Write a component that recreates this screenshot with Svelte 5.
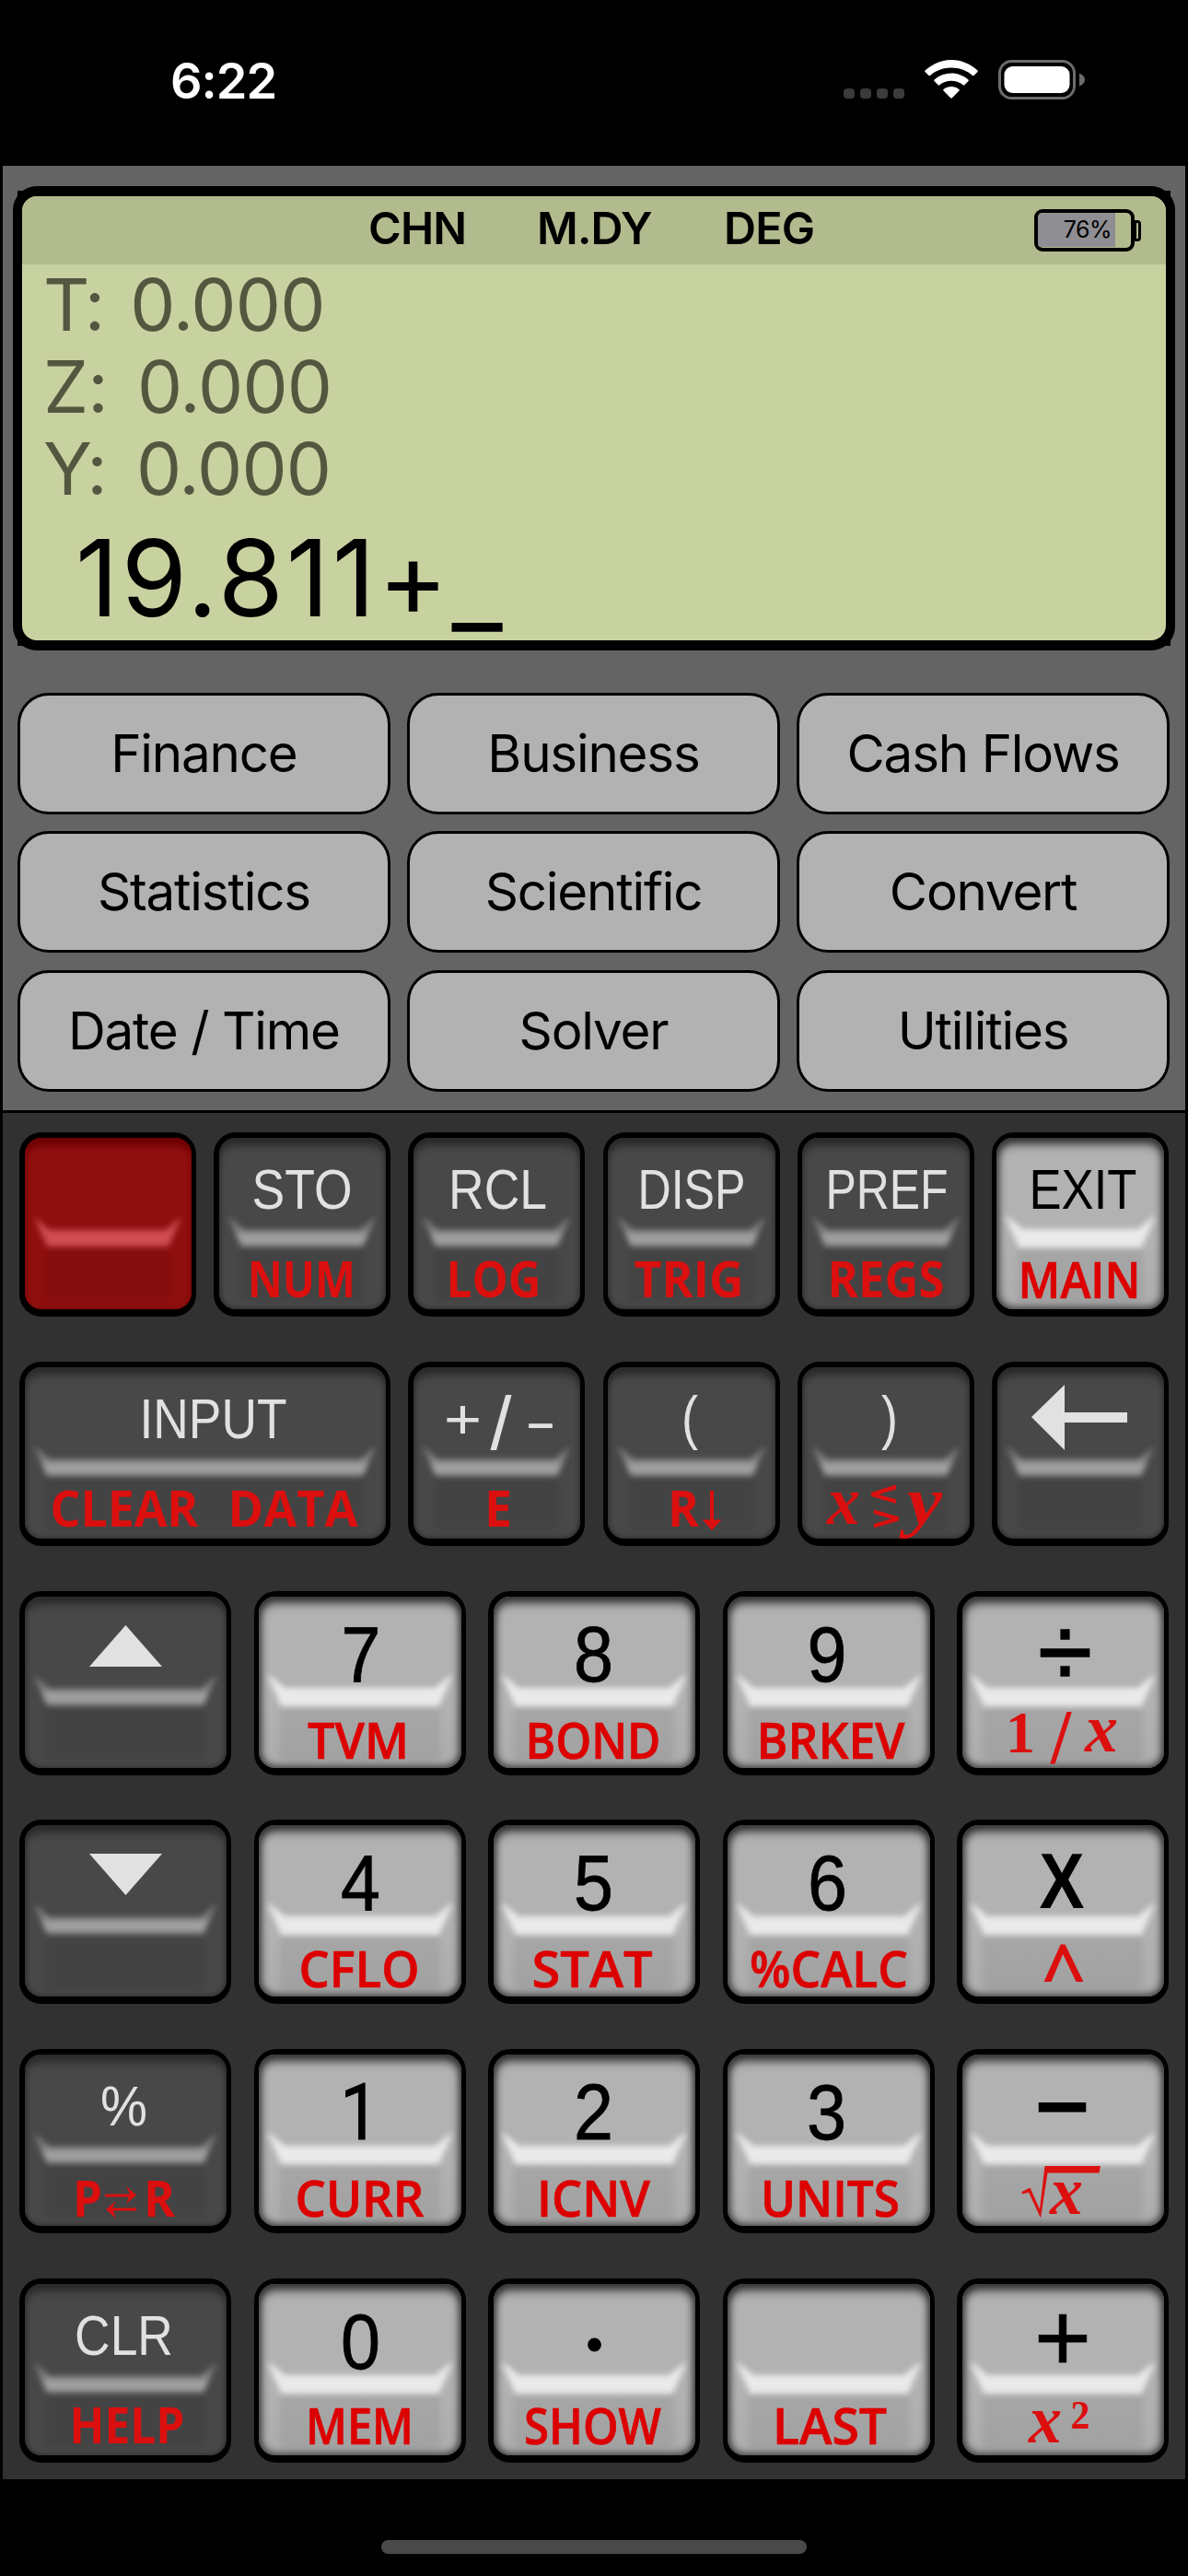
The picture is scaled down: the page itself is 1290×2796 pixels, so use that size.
<script lang="ts">
  type Label = {
    t: string;
    x: number;
    y: number;
    w: number;
    s: number;
    c: string;
  };

  type Key = {
    tone: "dark" | "light" | "red";
    width: number;
    labels: Label[];
    icons?: string[];
  };

  const menu = [
    "Finance", "Business", "Cash Flows",
    "Statistics", "Scientific", "Convert",
    "Date / Time", "Solver", "Utilities",
  ];

  const stack = [
    { name: "T:", value: "0.000" },
    { name: "Z:", value: "0.000" },
    { name: "Y:", value: "0.000" },
  ];

  // label helpers, x is the centre of the label inside its key
  const cap = (t: string, x: number, w: number, y = 82.5, s = 62): Label => ({ t, x, y, w, s, c: "cap" });
  const num = (t: string, x: number, c = "num"): Label => ({ t, x, y: 98, w: 43, s: 86, c });
  const alt = (t: string, x: number, w: number, y = 179): Label => ({ t, x, y, w, s: 54, c: "alt" });
  const math = (t: string, x: number, w: number, y: number, s = 74, c = "math"): Label => ({ t, x, y, w, s, c });

  const dark = (width: number, labels: Label[], icons: string[] = []): Key => ({ tone: "dark", width, labels, icons });
  const light = (width: number, labels: Label[], icons: string[] = []): Key => ({ tone: "light", width, labels, icons });

  const rows: Key[][] = [
    [
      { tone: "red", width: 192, labels: [] },
      dark(192, [cap("STO", 96, 109), alt("NUM", 95.5, 117)]),
      dark(192, [cap("RCL", 97.5, 107), alt("LOG", 93, 103)]),
      dark(192, [cap("DISP", 96, 117), alt("TRIG", 93, 119)]),
      dark(192, [cap("PREF", 97, 133), alt("REGS", 96, 127)]),
      light(192, [cap("EXIT", 99, 117), alt("MAIN", 95, 133, 180)]),
    ],
    [
      dark(403, [cap("INPUT", 210.5, 160), alt("CLEAR", 114, 161), alt("DATA", 297, 141)]),
      dark(192, [cap("+", 59.5, 41), cap("/", 101, 23, 95, 81), cap("-", 144, 35, 86), alt("E", 98, 30)]),
      dark(192, [cap("(", 94, 18, 82.5, 65), alt("R", 87, 34)], ["down"]),
      dark(192, [cap(")", 100, 18, 82.5, 65), math("x", 50, 36, 176), math("y", 138, 38, 176)], ["compare"]),
      dark(192, [], ["back"]),
    ],
    [
      dark(230, [], ["triUp"]),
      light(230, [num("7", 116), alt("TVM", 113, 110, 182)]),
      light(230, [num("8", 114.5), alt("BOND", 114, 147, 182)]),
      light(230, [num("9", 113), alt("BRKEV", 117, 161, 182)]),
      light(230, [{ t: "÷", x: 117.5, y: 104, w: 59, s: 112, c: "op thin" }, math("1", 69, 32, 175, 64, "math roman"), math("/", 113, 22, 187, 84, "math roman"), math("x", 157, 36, 174)]),
    ],
    [
      dark(230, [], ["triDown"]),
      light(230, [num("4", 115.5), alt("CFLO", 114, 131, 182)]),
      light(230, [num("5", 114.5), alt("STAT", 113, 131, 182)]),
      light(230, [num("6", 113.5), alt("%CALC", 115, 172, 182)]),
      light(230, [{ t: "X", x: 114, y: 96, w: 49, s: 86, c: "op" }, { t: "^", x: 116, y: 199, w: 48, s: 88, c: "caret" }]),
    ],
    [
      dark(230, [cap("%", 113.5, 51), alt("P", 74, 32, 182), alt("R", 152, 34, 182)], ["swap"]),
      light(230, [num("1", 114.5, "num one"), alt("CURR", 114.5, 140, 182)]),
      light(230, [num("2", 114.5), alt("ICNV", 114.5, 123, 182)]),
      light(230, [num("3", 112.5), alt("UNITS", 116.5, 151, 182)]),
      light(230, [{ t: "−", x: 114.5, y: 95, w: 60, s: 96, c: "op" }, math("x", 119, 36, 179)], ["root"]),
    ],
    [
      dark(230, [cap("CLR", 113.5, 107), alt("HELP", 117, 125, 178.5)]),
      light(230, [num("0", 115.5), alt("MEM", 114.5, 117, 179.5)]),
      light(230, [{ t: "•", x: 115.5, y: 89, w: 18, s: 52, c: "num" }, alt("SHOW", 113.5, 149, 179.5)]),
      light(230, [alt("LAST", 116, 124, 179.5)]),
      light(230, [{ t: "+", x: 115, y: 100, w: 62, s: 106, c: "num" }, math("x", 96, 36, 178), math("2", 134, 21, 163, 45, "math roman")]),
    ],
  ];

  const icons: Record<string, string> = {
    back: "M43 60 79 25V55H147V66H79V96Z",
    triUp: "M115.500 37 155 82H76Z",
    triDown: "M76 37H155L115.500 82Z",
    down: "M116 140H120V171.500H128.500L118 183 107.500 171.500H116Z",
    compare: "M107 133.500V138.500L88 144 107 149.500V154L80 146V142ZM83 160.500 110 168.500V172.500L83 180.500V176L102 170.500 83 165Z",
    swap: "M93 157.500H120L116 149 127 158.500 116 168 119 160.500H93ZM127 172.500H101L105 165 94 174 105 184 102 175.500H127Z",
    root: "M70.500 155 79.500 150.500 90 174 95.500 127H156L154.500 134.500H98.500L91 183.500 78 155.500 71 157.500Z",
  };

  // bright crease across the middle of a key, turned up at both ends
  function ridge(w: number) {
    return `M16 92 30 124H${w - 30}L${w - 16} 92 ${w - 33} 106H33Z`;
  }
</script>

<svg class="defs" width="0" height="0">
  <defs>
    <linearGradient id="crease-dark" gradientUnits="userSpaceOnUse" x1="0" y1="92" x2="0" y2="125">
      <stop offset="0" stop-color="#8a8a8a" />
      <stop offset="0.35" stop-color="#7a7a7a" />
      <stop offset="0.7" stop-color="#a6a6a6" />
      <stop offset="1" stop-color="#8c8c8c" />
    </linearGradient>
  </defs>
</svg>

<div class="phone">
  <header class="status">
    <span class="time">6:22</span>
    <div class="signals">
      <svg width="68" height="12" viewBox="0 0 68 12" fill="#3b3b3b">
        <rect width="12" height="11" rx="4" />
        <rect x="18" width="12" height="11" rx="4" />
        <rect x="36" width="12" height="11" rx="4" />
        <rect x="54" width="12" height="11" rx="4" />
      </svg>
      <svg class="wifi" width="58" height="42" viewBox="0 0 58 42" fill="#fff">
        <path d="M29 0C40 0 50 4.500 57.500 11.500Q58.200 12.300 57.500 13L53.500 17Q52.800 17.700 52 17C46 11.500 38 8.500 29 8.500S12 11.500 6 17Q5.200 17.700 4.500 17L.500 13Q-.2 12.300.500 11.500C8 4.500 18 0 29 0Z" />
        <path d="M29 14.500C36 14.500 42.500 17.200 47.500 21.500Q48.300 22.300 47.500 23L43.300 27.200Q42.500 27.900 41.700 27.200C38.300 24.500 34 22.800 29 22.800S19.700 24.500 16.300 27.200Q15.500 27.900 14.700 27.200L10.500 23Q9.700 22.300 10.500 21.500C15.500 17.200 22 14.500 29 14.500Z" />
        <path d="M29 29C32.200 29 35.200 30.200 37.500 32Q38.300 32.800 37.500 33.500L29.800 41.300Q29 42 28.200 41.300L20.500 33.500Q19.700 32.800 20.500 32C22.800 30.200 25.800 29 29 29Z" />
      </svg>
      <svg width="95" height="43" viewBox="0 0 95 43">
        <rect x="1.500" y="1.500" width="81" height="40" rx="13" fill="none" stroke="#6c6c6c" stroke-width="3" />
        <rect x="6.500" y="7" width="71" height="29" rx="9" fill="#fff" />
        <path d="M88 14.500Q94 17 94 21.500T88 28.500Z" fill="#6c6c6c" />
      </svg>
    </div>
  </header>

  <main class="calc">
    <section class="top">
      <div class="lcd">
        <div class="screen">
          <div class="modes">
            <span class="mode chn">CHN</span>
            <span class="mode mdy">M.DY</span>
            <span class="mode deg">DEG</span>
            <div class="battery">
              <div class="cell"><div class="level">76%</div></div>
              <div class="nub"></div>
            </div>
          </div>
          <div class="stack">
            {#each stack as reg}
              <div class="reg" class:narrow={reg.name === "T:"}><span>{reg.name}</span><span>{reg.value}</span></div>
            {/each}
          </div>
          <div class="entry">19.811+<span class="cursor">_</span></div>
        </div>
      </div>

      <nav class="menu">
        {#each menu as item}
          <button class="menu-item">{item}</button>
        {/each}
      </nav>
    </section>

    <section class="keypad">
      {#each rows as row}
        <div class="row">
          {#each row as key}
            <button class="key {key.tone}" style="width: {key.width}px">
              <span class="face"></span>
              <svg viewBox="0 0 {key.width} 200">
                <rect class="well" x="28" y="126" width={key.width - 56} height="58" rx="6" />
                <path class="ridge" d={ridge(key.width)} />
                {#each key.labels as l}
                  <text class={l.c} x={l.x} y={l.y} font-size={l.s} textLength={l.w} lengthAdjust="spacingAndGlyphs">{l.t}</text>
                {/each}
                {#each key.icons ?? [] as name}
                  <path class={["back", "triUp", "triDown"].includes(name) ? "icon" : "icon accent"} d={icons[name]} />
                {/each}
              </svg>
            </button>
          {/each}
        </div>
      {/each}
    </section>
  </main>

  <div class="home"></div>
</div>

<style>
  :global(body) {
    background: #000;
  }

  .defs {
    position: absolute;
  }

  .phone {
    display: flex;
    flex-direction: column;
    width: 1290px;
    height: 2796px;
    background: #000;
    font-family: Inter, "Liberation Sans", sans-serif;
    color: #000;
    overflow: hidden;
  }

  button {
    padding: 0;
    border: none;
    background: none;
    font: inherit;
    color: inherit;
  }

  .status {
    display: flex;
    justify-content: space-between;
    box-sizing: border-box;
    height: 180px;
    padding: 55px 111px 0 185px;
    color: #fff;
  }

  .time {
    font-size: 54px;
    font-weight: 600;
    line-height: 66px;
    letter-spacing: -1px;
  }

  .signals {
    display: flex;
    align-items: flex-end;
    height: 53px;
  }

  .wifi {
    margin: 0 22px 1px 20px;
  }

  .calc {
    margin: 0 3px;
  }

  .top {
    box-sizing: border-box;
    height: 1028px;
    padding: 22px 11px 0;
    border-bottom: 3px solid #000;
    background: #646464;
  }

  .lcd {
    position: relative;
    box-sizing: border-box;
    height: 504px;
    padding: 11px 10px;
    border-radius: 26px;
    background: #000;
  }

  .lcd::before {
    content: "";
    position: absolute;
    inset: 5px;
    background: #000;
  }

  .screen {
    position: relative;
    height: 482px;
    border-radius: 16px;
    background: #c8d1a0;
  }

  .modes {
    display: flex;
    align-items: center;
    height: 74px;
    padding-left: 376px;
    border-radius: 16px 16px 0 0;
    background: #b2bb8e;
    font-size: 48.5px;
    font-weight: 600;
    letter-spacing: -0.8px;
  }

  .mode {
    padding-bottom: 5px;
    white-space: nowrap;
  }

  .chn {
    width: 183px;
  }

  .mdy {
    width: 203px;
  }

  .deg {
    width: 337px;
  }

  .battery {
    display: flex;
    align-items: center;
  }

  .cell {
    box-sizing: border-box;
    width: 109px;
    height: 46px;
    border: 4.5px solid #000;
    border-radius: 9px;
    overflow: hidden;
  }

  .level {
    box-sizing: border-box;
    width: 84px;
    height: 37px;
    padding-right: 4px;
    background: #8e8e93;
    font-size: 25px;
    font-weight: 400;
    line-height: 36px;
    letter-spacing: -0.5px;
    text-align: right;
  }

  .nub {
    box-sizing: border-box;
    width: 8px;
    height: 23px;
    margin-left: -1px;
    border: 3px solid #000;
    border-radius: 0 4px 4px 0;
  }

  .stack {
    margin-top: -1px;
    padding-left: 23px;
    font-size: 78px;
    line-height: 89px;
    color: #54573f;
  }

  .reg {
    display: flex;
    gap: 32px;
    height: 89px;
    letter-spacing: -0.8px;
  }

  .narrow {
    gap: 30px;
  }

  .narrow span:first-child {
    letter-spacing: -3px;
  }

  .entry {
    display: flex;
    height: 136px;
    padding: 7px 0 0 58px;
    font-size: 115px;
    line-height: 136px;
    letter-spacing: 3px;
  }

  .cursor {
    padding: 4px 0 0 1px;
    font-size: 121px;
  }

  .menu {
    display: grid;
    grid-template-columns: repeat(3, 1fr);
    gap: 18.3px;
    padding: 46px 6px 0 5px;
  }

  .menu-item {
    height: 132px;
    border: 3px solid #000;
    border-radius: 34px;
    background: #b2b2b2;
    font-size: 56.5px;
    line-height: 66px;
    letter-spacing: -1.2px;
  }

  .keypad {
    display: flex;
    flex-direction: column;
    gap: 48.75px;
    box-sizing: border-box;
    height: 1483px;
    padding: 21px 18px 0;
    background: #313131;
  }

  .row {
    display: flex;
    justify-content: space-between;
    height: 200px;
  }

  .key {
    position: relative;
    flex-shrink: 0;
    box-sizing: border-box;
    height: 200px;
    padding: 6px 5px 8px 5.5px;
    border-radius: 24px;
    background: #000;
  }

  .key svg {
    position: absolute;
    left: 0;
    top: 0;
    width: 100%;
    height: 200px;
    overflow: visible;
  }

  .face {
    display: block;
    height: 186px;
    border-radius: 18px;
    background: #484848;
    box-shadow: inset 0 12px 9px -4px #2a2a2a, inset 0 0 5px 1px #2c2c2c;
  }

  .light .face {
    background: linear-gradient(#b2b2b2 60%, #acacac);
    box-shadow: inset 0 9px 12px -3px #333, inset 0 0 9px 2px #333;
  }

  .red .face {
    background: #8f0f0f;
    box-shadow: inset 0 12px 9px -4px #6c0000, inset 0 0 5px #780808;
  }

  .ridge {
    fill: url(#crease-dark);
    filter: blur(3px);
  }

  .light .ridge {
    fill: #eaeaea;
    stroke: #eaeaea;
    stroke-width: 2px;
  }

  .red .ridge {
    fill: #cf4c52;
  }

  .well {
    fill: #000;
    opacity: 0.06;
    filter: blur(3px);
  }

  text {
    text-anchor: middle;
    font-family: "Liberation Sans", Arial, sans-serif;
    fill: #e1e1e1;
  }

  .light text {
    fill: #000;
  }

  .light .num {
    stroke: #000;
    stroke-width: 0.8px;
  }

  .one {
    font-family: Roboto, "Liberation Sans", sans-serif;
  }

  .op {
    font-weight: 700;
  }

  .thin {
    font-weight: 400;
    stroke: #000;
    stroke-width: 1.5px;
  }

  .key .alt,
  .key .caret,
  .key .math {
    fill: #dc0f0f;
  }

  .alt {
    font-family: "Open Sans", "Noto Sans", sans-serif;
    font-weight: 700;
  }

  .light .alt {
    fill: #dc0000;
    font-weight: 600;
    stroke: #dc0000;
    stroke-width: 0.7px;
  }

  .caret {
    font-family: "Open Sans", "Noto Sans", sans-serif;
    font-weight: 600;
  }

  .math {
    font-family: "Liberation Serif", "Times New Roman", serif;
    font-style: italic;
    font-weight: 700;
  }

  .roman {
    font-style: normal;
  }

  .icon {
    fill: #e1e1e1;
  }

  .accent {
    fill: #dc0f0f;
  }

  .home {
    width: 462px;
    height: 15px;
    margin: 66px auto 0;
    border-radius: 8px;
    background: #4a4a4a;
  }
</style>
